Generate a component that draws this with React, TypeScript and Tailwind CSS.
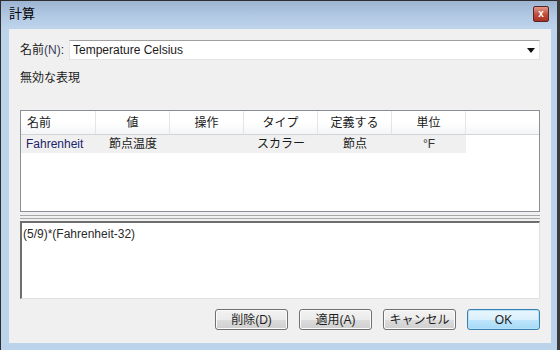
const cols = ["名前", "値", "操作", "タイプ", "定義する", "単位"];
const row = ["Fahrenheit", "節点温度", "", "スカラー", "節点", "°F"];

function Btn({ label, primary }: { label: string; primary?: boolean }) {
  return (
    <button
      className={`w-[73px] h-[21px] rounded-[3px] border text-[12px] leading-none text-[#1e1e1e] ${
        primary
          ? "border-[#3c7fb1] bg-[linear-gradient(#eaf6fd,#d9f0fc_50%,#bee6fd_51%,#a7d9f5)] shadow-[inset_0_0_0_1px_#b5e1f7]"
          : "border-[#707070] bg-[linear-gradient(#f2f2f2,#ebebeb_50%,#dddddd_51%,#cfcfcf)] shadow-[inset_0_0_0_1px_#fcfcfc]"
      }`}
    >
      {label}
    </button>
  );
}

export default function App() {
  return (
    <div className="w-[560px] h-[350px] flex bg-[#3b3b3b] overflow-hidden font-['Liberation_Sans','Noto_Sans_CJK_JP',sans-serif] text-[12px] text-[#1a1a1a]">
      <div className="w-[557px] h-[350px] flex flex-col border-l border-t border-[#2e2e2e] bg-[#bcd3ec]">
        {/* title bar */}
        <div className="h-[28px] flex items-center justify-between pl-[8px] pr-[8px] bg-[linear-gradient(#9db5d2,#b4cbe6_60%,#bfd4ec)]">
          <span className="text-[13px] text-black mt-[-2px]">計算</span>
          <div className="w-[16px] h-[16px] mt-[-2px] rounded-[2px] border border-[#5a2424] bg-[linear-gradient(#e39a8c,#c24f3f_50%,#a8301f)] flex items-center justify-center">
            <span className="text-white text-[10px] font-bold leading-none">x</span>
          </div>
        </div>

        {/* client area */}
        <div className="ml-[8px] w-[542px] h-[314px] bg-[#f0f0f0] flex flex-col px-[11px]">
          <div className="mt-[11px] flex items-center h-[20px]">
            <span className="w-[49px] text-[12px]">
              名前<span className="text-[#3b3b5a]">(N)</span>:
            </span>
            <div className="flex-1 h-[20px] bg-white border border-[#e3e3e3] border-t-[#a0a0a0] flex items-center justify-between pl-[3px] pr-[4px]">
              <span className="text-[12px]">Temperature Celsius</span>
              <svg width="8" height="5" viewBox="0 0 8 5">
                <path d="M0 0h8L4 5z" fill="#111" />
              </svg>
            </div>
          </div>

          <div className="mt-[10px] h-[16px] text-[12px] leading-[16px]">無効な表現</div>

          {/* table */}
          <div className="mt-[24px] h-[102px] bg-white border border-[#8a8f96] flex flex-col">
            <div className="h-[24px] flex border-b border-[#d5d5d5] bg-[linear-gradient(#ffffff,#ffffff_50%,#f4f5f7)]">
              {cols.map((c, i) => (
                <div
                  key={c}
                  className={`w-[74px] shrink-0 border-r border-[#e5e5e5] flex items-center ${
                    i === 0 ? "justify-start pl-[6px] w-[75px]" : "justify-center"
                  }`}
                >
                  {c}
                </div>
              ))}
              <div className="flex-1" />
            </div>
            <div className="h-[18px] flex">
              {row.map((c, i) => (
                <div
                  key={i}
                  className={`w-[74px] shrink-0 bg-[#f0f0f0] flex items-center ${
                    i === 0 ? "justify-start pl-[5px] w-[75px] text-[#22226a]" : "justify-center"
                  } ${i === 5 ? "text-[#333]" : ""}`}
                >
                  {c}
                </div>
              ))}
            </div>
          </div>

          {/* splitter */}
          <div className="h-[9px] flex flex-col pt-[3px] gap-[2px]">
            <div className="h-px bg-[#a8a8a8]" />
            <div className="h-px bg-[#a8a8a8]" />
          </div>

          {/* expression box */}
          <div className="h-[78px] bg-white border-t-2 border-l-2 border-[#6e6e6e] border-r border-r-[#e0e0e0] border-b border-b-[#e0e0e0] pl-[1px] pt-[3px] text-[12px] leading-[16px] text-[#2a2a2a]">
            (5/9)*(Fahrenheit-32)
          </div>

          {/* buttons */}
          <div className="mt-[10px] flex justify-end gap-[11px]">
            <Btn label="削除(D)" />
            <Btn label="適用(A)" />
            <Btn label="キャンセル" />
            <Btn label="OK" primary />
          </div>
        </div>
      </div>
    </div>
  );
}
